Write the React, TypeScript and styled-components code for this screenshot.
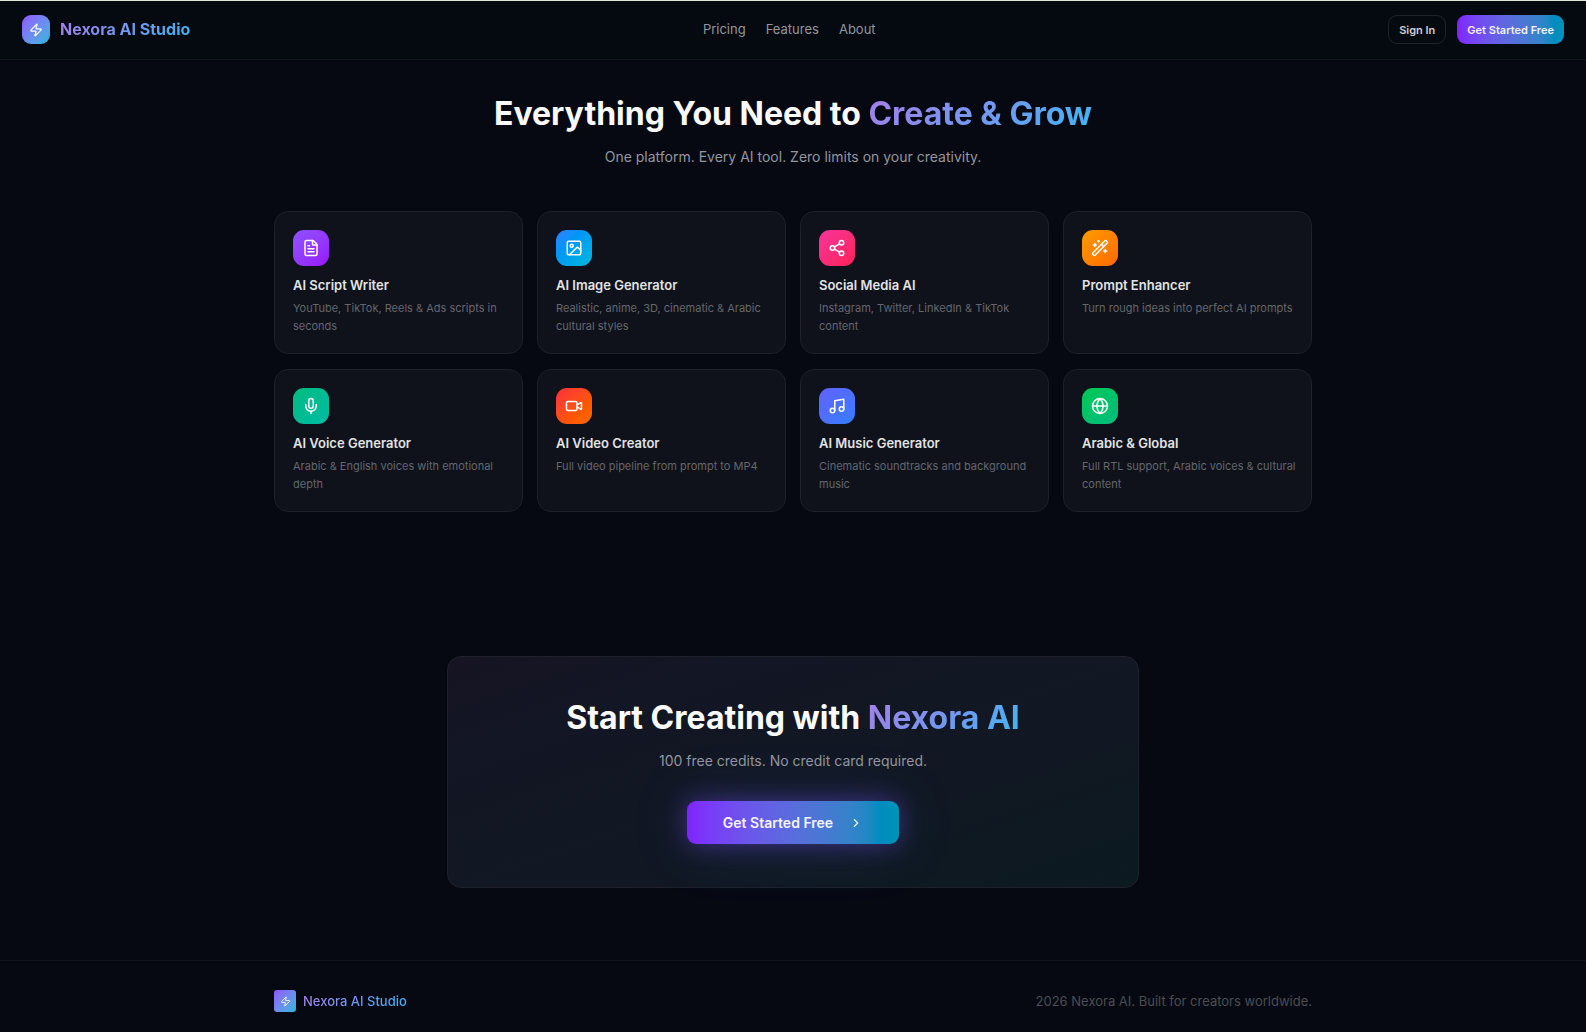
import React from "react";
import styled, { createGlobalStyle } from "styled-components";
import {
  ChevronRight,
  FileText,
  Globe,
  Image,
  Mic,
  Music,
  Share2,
  Video,
  WandSparkles,
  Zap,
  type LucideIcon,
} from "lucide-react";

const GlobalStyle = createGlobalStyle`
  *, *::before, *::after { box-sizing: border-box; }
  body {
    margin: 0;
    background: #060912;
    color: #fafafa;
    font-family: Inter, "Liberation Sans", sans-serif;
  }
  h1, h2, h3, p { margin: 0; }
`;

const accentGradient =
  "linear-gradient(to right in oklab, oklch(0.541 0.281 293.009), oklch(0.609 0.126 221.723))";

const Page = styled.div`
  min-height: 100vh;
  border-top: 1px solid #dfe6e0;
`;

const Header = styled.header`
  display: grid;
  grid-template-columns: auto 1fr auto;
  align-items: center;
  padding: 14px 22px 15px;
  background: #050a11;
  border-bottom: 1px solid #14171e;
`;

const Brand = styled.a<{ $small?: boolean }>`
  display: flex;
  align-items: center;
  gap: ${(p) => (p.$small ? 7 : 10)}px;
  font-size: ${(p) => (p.$small ? 13 : 16)}px;
  line-height: ${(p) => (p.$small ? 17 : 23)}px;
  font-weight: ${(p) => (p.$small ? 500 : 700)};
  text-decoration: none;
`;

const BrandMark = styled.span<{ $small?: boolean }>`
  display: grid;
  place-items: center;
  width: ${(p) => (p.$small ? 22 : 28)}px;
  height: ${(p) => (p.$small ? 22 : 29)}px;
  border-radius: ${(p) => (p.$small ? 3 : 9)}px;
  color: #ffffff;
  background: linear-gradient(to bottom right in oklab, #8e51ff, #00b8db);
`;

const GradientText = styled.span`
  color: transparent;
  background: linear-gradient(135deg, #a67ee9, #6f9af0 55%, #3fb6f4);
  background-clip: text;
  -webkit-background-clip: text;
`;

const Nav = styled.nav`
  display: flex;
  justify-content: center;
  gap: 20px;
`;

const NavLink = styled.a`
  color: #94969b;
  font-size: 13px;
  line-height: 17px;
  text-decoration: none;
`;

const Actions = styled.div`
  display: flex;
  gap: 11px;
`;

const SmallButton = styled.button<{ $primary?: boolean }>`
  height: 29px;
  padding: 0 10px;
  border: ${(p) => (p.$primary ? "0" : "1px solid #1f2229")};
  border-radius: 9px;
  background: ${(p) => (p.$primary ? accentGradient : "transparent")};
  color: ${(p) => (p.$primary ? "#f3f0ff" : "#cdced0")};
  font: 600 11px/16px Inter, "Liberation Sans", sans-serif;
  white-space: nowrap;
`;

const Features = styled.section`
  max-width: 1038px;
  margin: 0 auto;
  padding: 36px 0 72px;
`;

const Intro = styled.div`
  text-align: center;
  margin-bottom: 43px;
`;

const Title = styled.h2`
  font-size: 32px;
  line-height: 36px;
  font-weight: 700;
`;

const Lead = styled.p`
  margin-top: 14px;
  color: #94969f;
  font-size: 14px;
  line-height: 22px;
`;

const Grid = styled.div`
  display: grid;
  grid-template-columns: repeat(4, 1fr);
  gap: 15px 14px;
  @media (max-width: 900px) {
    grid-template-columns: repeat(2, 1fr);
  }
`;

const Card = styled.article`
  padding: 18px 14px 18px 18px;
  border: 1px solid #1d2028;
  border-radius: 14px;
  background: #0f121a;
`;

const IconTile = styled.div<{ $from: string; $to: string }>`
  display: grid;
  place-items: center;
  width: 36px;
  height: 36px;
  margin-bottom: 10px;
  border-radius: 11px;
  color: #ffffff;
  background: linear-gradient(
    to bottom right in oklab,
    ${(p) => p.$from},
    ${(p) => p.$to}
  );
`;

const CardTitle = styled.h3`
  color: #e2e3e5;
  font-size: 13px;
  line-height: 18px;
  font-weight: 600;
`;

const CardText = styled.p`
  margin-top: 5px;
  color: #64666e;
  font-size: 11px;
  line-height: 18px;
`;

const CtaSection = styled.section`
  padding: 72px 22px;
`;

const CtaCard = styled.div`
  display: flex;
  flex-direction: column;
  align-items: center;
  max-width: 692px;
  margin: 0 auto;
  padding: 43px;
  border: 1px solid #1e212a;
  border-radius: 14px;
  background: linear-gradient(to bottom right, #171423, #131624 20%, #111823 65%, #0c1a20);
  text-align: center;
`;

const CtaButton = styled.button`
  display: flex;
  align-items: center;
  gap: 16px;
  height: 43px;
  margin-top: 29px;
  padding: 0 36px;
  border: 0;
  border-radius: 9px;
  background: ${accentGradient};
  box-shadow: 0 0 24px rgba(124, 77, 255, 0.42), 0 0 60px rgba(60, 110, 210, 0.2);
  color: #f5f3ff;
  font: 600 14px/22px Inter, "Liberation Sans", sans-serif;
`;

const Footer = styled.footer`
  padding: 29px 22px 20px;
  border-top: 1px solid #12151c;
`;

const FooterInner = styled.div`
  display: flex;
  align-items: center;
  justify-content: space-between;
  max-width: 1038px;
  margin: 0 auto;
`;

const Copyright = styled.p`
  color: #4b4d54;
  font-size: 13px;
  line-height: 17px;
`;

type Feature = {
  icon: LucideIcon;
  title: string;
  text: string;
  from: string;
  to: string;
};

const features: Feature[] = [
  { icon: FileText, title: "AI Script Writer", text: "YouTube, TikTok, Reels & Ads scripts in seconds", from: "#8e51ff", to: "#9810fa" },
  { icon: Image, title: "AI Image Generator", text: "Realistic, anime, 3D, cinematic & Arabic cultural styles", from: "oklch(0.623 0.214 259.815)", to: "oklch(0.715 0.143 215.221)" },
  { icon: Share2, title: "Social Media AI", text: "Instagram, Twitter, LinkedIn & TikTok content", from: "#f6339a", to: "#ff2056" },
  { icon: WandSparkles, title: "Prompt Enhancer", text: "Turn rough ideas into perfect AI prompts", from: "#fe9a00", to: "#ff6900" },
  { icon: Mic, title: "AI Voice Generator", text: "Arabic & English voices with emotional depth", from: "#00bc7d", to: "#00bba7" },
  { icon: Video, title: "AI Video Creator", text: "Full video pipeline from prompt to MP4", from: "oklch(0.637 0.237 25.331)", to: "oklch(0.705 0.213 47.604)" },
  { icon: Music, title: "AI Music Generator", text: "Cinematic soundtracks and background music", from: "#615fff", to: "#2b7fff" },
  { icon: Globe, title: "Arabic & Global", text: "Full RTL support, Arabic voices & cultural content", from: "#00c951", to: "#00bc7d" },
];

export default function App() {
  return (
    <Page>
      <GlobalStyle />
      <Header>
        <Brand href="#home">
          <BrandMark>
            <Zap size={14} />
          </BrandMark>
          <GradientText>Nexora AI Studio</GradientText>
        </Brand>
        <Nav aria-label="Main">
          <NavLink href="#pricing">Pricing</NavLink>
          <NavLink href="#features">Features</NavLink>
          <NavLink href="#about">About</NavLink>
        </Nav>
        <Actions>
          <SmallButton type="button">Sign In</SmallButton>
          <SmallButton type="button" $primary>
            Get Started Free
          </SmallButton>
        </Actions>
      </Header>
      <main>
        <Features id="features">
          <Intro>
            <Title>
              Everything You Need to <GradientText>Create &amp; Grow</GradientText>
            </Title>
            <Lead>One platform. Every AI tool. Zero limits on your creativity.</Lead>
          </Intro>
          <Grid>
            {features.map(({ icon: Icon, title, text, from, to }) => (
              <Card key={title}>
                <IconTile $from={from} $to={to}>
                  <Icon size={18} />
                </IconTile>
                <CardTitle>{title}</CardTitle>
                <CardText>{text}</CardText>
              </Card>
            ))}
          </Grid>
        </Features>
        <CtaSection>
          <CtaCard>
            <Title>
              Start Creating with <GradientText>Nexora AI</GradientText>
            </Title>
            <Lead>100 free credits. No credit card required.</Lead>
            <CtaButton type="button">
              Get Started Free
              <ChevronRight size={14} />
            </CtaButton>
          </CtaCard>
        </CtaSection>
      </main>
      <Footer>
        <FooterInner>
          <Brand href="#home" $small>
            <BrandMark $small>
              <Zap size={11} />
            </BrandMark>
            <GradientText>Nexora AI Studio</GradientText>
          </Brand>
          <Copyright>2026 Nexora AI. Built for creators worldwide.</Copyright>
        </FooterInner>
      </Footer>
    </Page>
  );
}
